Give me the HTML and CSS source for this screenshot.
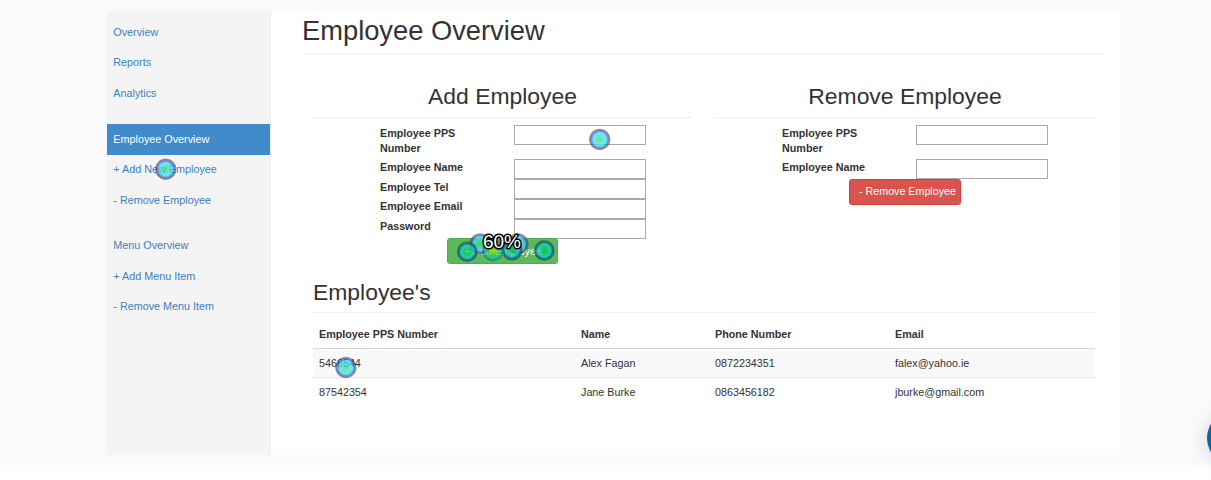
FILE: index.html
```html
<!DOCTYPE html>
<html lang="en">
<head>
<meta charset="utf-8">
<title>Employee Overview</title>
<link rel="stylesheet" href="styles.css">
</head>
<body>
<div class="page">
  <div class="card">
    <nav class="sidebar">
      <ul class="nav"><li><a>Overview</a></li><li><a>Reports</a></li><li><a>Analytics</a></li></ul>
      <ul class="nav"><li class="active"><a>Employee Overview</a></li><li><a>+ Add New Employee</a></li><li><a>- Remove Employee</a></li></ul>
      <ul class="nav"><li><a>Menu Overview</a></li><li><a>+ Add Menu Item</a></li><li><a>- Remove Menu Item</a></li></ul>
    </nav>
    <main class="main">
      <h1>Employee Overview</h1>
      <div class="forms">
        <section>
          <h2 class="centered">Add Employee</h2>
          <form class="form">
            <label>Employee PPS Number</label><input type="text">
            <label>Employee Name</label><input type="text">
            <label>Employee Tel</label><input type="text">
            <label>Employee Email</label><input type="text">
            <label>Password</label><input type="text">
            <button type="button" class="btn add">+ Add Employee</button>
          </form>
        </section>
        <section>
          <h2 class="centered">Remove Employee</h2>
          <form class="form">
            <label>Employee PPS Number</label><input type="text">
            <label>Employee Name</label><input type="text">
            <button type="button" class="btn remove">- Remove Employee</button>
          </form>
        </section>
      </div>
      <section class="list">
        <h2>Employee's</h2>
        <table>
          <colgroup><col class="c1"><col class="c2"><col class="c3"><col></colgroup>
          <thead><tr><th>Employee PPS Number</th><th>Name</th><th>Phone Number</th><th>Email</th></tr></thead>
          <tbody>
            <tr class="odd"><td>5466544</td><td>Alex Fagan</td><td>0872234351</td><td>falex@yahoo.ie</td></tr>
            <tr><td>87542354</td><td>Jane Burke</td><td>0863456182</td><td>jburke@gmail.com</td></tr>
          </tbody>
        </table>
      </section>
    </main>
  </div>
</div>
<svg class="heatmap" width="1211" height="480" viewBox="0 0 1211 480">
  <defs>
    <radialGradient id="cool">
      <stop offset="0" stop-color="#4fce7c" stop-opacity=".75"/>
      <stop offset=".25" stop-color="#4fd596" stop-opacity=".75"/>
      <stop offset=".5" stop-color="#2cecf2" stop-opacity=".75"/>
      <stop offset=".65" stop-color="#30d4ff" stop-opacity=".76"/>
      <stop offset=".76" stop-color="#4a5ab4" stop-opacity=".7"/>
      <stop offset=".92" stop-color="#3b3866" stop-opacity=".62"/>
      <stop offset="1" stop-color="#3b3866" stop-opacity=".4"/>
    </radialGradient>
    <radialGradient id="deep">
      <stop offset="0" stop-color="#10b944" stop-opacity=".72"/>
      <stop offset=".3" stop-color="#10c868" stop-opacity=".72"/>
      <stop offset=".58" stop-color="#04dec8" stop-opacity=".75"/>
      <stop offset=".7" stop-color="#0898b4" stop-opacity=".75"/>
      <stop offset=".82" stop-color="#184a6a" stop-opacity=".78"/>
      <stop offset="1" stop-color="#295e50" stop-opacity=".55"/>
    </radialGradient>
    <radialGradient id="hot">
      <stop offset="0" stop-color="#c0e400" stop-opacity=".85"/>
      <stop offset=".4" stop-color="#48cf20" stop-opacity=".75"/>
      <stop offset=".7" stop-color="#08cda5" stop-opacity=".72"/>
      <stop offset="1" stop-color="#205b72" stop-opacity=".65"/>
    </radialGradient>
  </defs>
  <circle cx="599.7" cy="139.4" r="10.7" fill="url(#cool)"/>
  <circle cx="165.7" cy="169.2" r="10.7" fill="url(#cool)"/>
  <circle cx="345.9" cy="367.5" r="10.7" fill="url(#cool)"/>
  <circle cx="480" cy="244" r="10.7" fill="url(#cool)"/>
  <circle cx="518" cy="244" r="10.7" fill="url(#cool)"/>
  <circle cx="467.3" cy="251.7" r="10.5" fill="url(#deep)"/>
  <circle cx="512" cy="250" r="10.7" fill="url(#deep)"/>
  <circle cx="493" cy="250.5" r="10.7" fill="url(#hot)"/>
  <circle cx="544.3" cy="250.5" r="10.5" fill="url(#deep)"/>
  <text x="502" y="248" text-anchor="middle" class="percent">60%</text>
</svg>
<div class="bubble"></div>
</body>
</html>
```
FILE: styles.css
```css
* { box-sizing: border-box; }
html, body { margin: 0; height: 480px; overflow: hidden; }
body {
  position: relative;
  padding-top: 1px;
  background: #fff;
  color: #333;
  font: 10.7px/15.3px "Liberation Sans", Arial, sans-serif;
}
.page { height: 464px; padding: 10px 92px 10px 107px; background: #f8fafc; }
.card { display: flex; height: 444px; background: #fff; }
.sidebar {
  width: 164px;
  padding-top: 6.4px;
  background: #f4f4f4;
  border-right: 1px solid #eee;
  font-size: 10.8px;
}
.nav { list-style: none; margin: 0 0 15.2px; padding: 0; }
.nav li { height: 30.5px; padding: 7.6px 6.3px; color: #3f80bd; white-space: nowrap; }
.nav .active { background: #428bca; color: #fff; }
.main { flex: 1; padding: 0 13px 0 31px; }
h1, h2 { margin: 0; font-weight: normal; }
h1 {
  height: 43px;
  padding-top: 5px;
  border-bottom: 1px solid #eee;
  font-size: 27.3px;
  line-height: 30px;
}
h2 {
  height: 34px;
  border-bottom: 1px solid #eee;
  font-size: 22.9px;
  line-height: 24px;
}
.centered { text-align: center; }
.forms {
  display: grid;
  grid-template-columns: 379px 380px;
  column-gap: 23px;
  height: 196px;
  margin: 30px 0 0 11px;
}
.form {
  display: grid;
  grid-template-columns: 134px 132px;
  grid-template-rows: 34.3px;
  grid-auto-rows: 19.8px;
  margin: 7px 0 0 67px;
}
.form label { width: 100px; padding-top: .5px; font-weight: bold; font-size: 10.75px; }
.form input {
  width: 132px;
  height: 20px;
  padding: 0;
  border: 1px solid #aaa;
  background: #fff;
}
.btn {
  grid-column: 1 / 3;
  width: 111px;
  height: 26px;
  margin-left: 67px;
  border: 1px solid;
  border-radius: 3px;
  color: #fff;
  font: inherit;
  white-space: nowrap;
}
.add { padding: 0 0 0 1px; background: #5cb85c; border-color: #4cae4c; }
.remove { width: 112px; padding: 0 0 0 5px; background: #d9534f; border-color: #d43f3a; }
.list { width: 782px; margin-left: 11px; }
.list h2 { height: 33px; }
table {
  width: 100%;
  margin-top: 9px;
  border-collapse: separate;
  border-spacing: 0;
  table-layout: fixed;
  font-size: 10.75px;
}
.c1 { width: 262px; }
.c2 { width: 134px; }
.c3 { width: 180px; }
th, td { height: 28px; padding: 1px 0 0 6px; text-align: left; }
th { height: 27px; padding: 0 0 1px 6px; border-bottom: 1px solid #d6d6d6; }
.odd td { height: 29px; padding-top: 1px; background: #f9f9f9; border-bottom: 1px solid #e9e9e9; }
.heatmap { position: absolute; left: 0; top: 0; pointer-events: none; }
.percent {
  fill: #fff;
  stroke: #000;
  stroke-width: 3px;
  stroke-linejoin: round;
  paint-order: stroke;
  font-size: 19px;
}
.bubble {
  position: absolute;
  left: 1207px;
  top: 411px;
  width: 54px;
  height: 54px;
  border-radius: 50%;
  background: #07689f;
  box-shadow: 0 2px 20px rgba(0, 0, 0, .15);
}
```
